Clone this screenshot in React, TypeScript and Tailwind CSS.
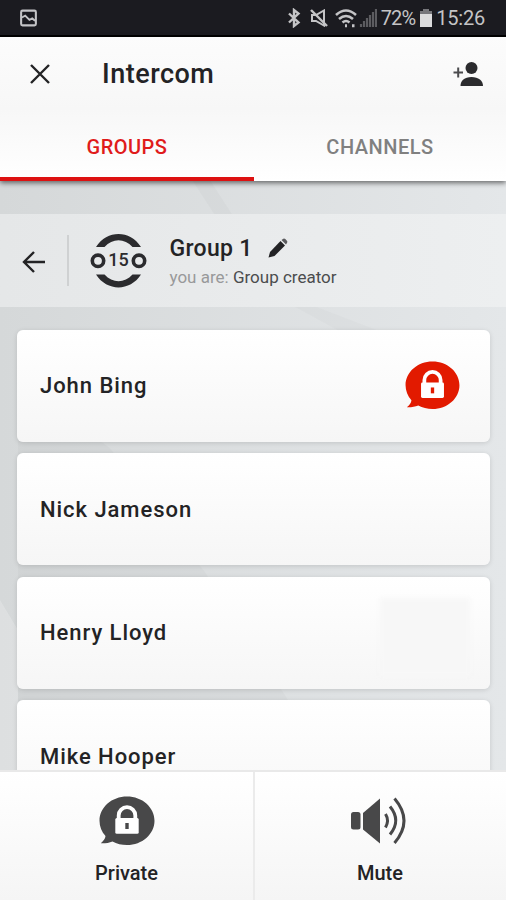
import React, { useState } from 'react';

type Tab = 'groups' | 'channels';

interface Member {
  id: number;
  name: string;
  isPrivate?: boolean;
  isDimmed?: boolean;
}

const members: Member[] = [
  { id: 1, name: 'John Bing', isPrivate: true },
  { id: 2, name: 'Nick Jameson' },
  { id: 3, name: 'Henry Lloyd', isDimmed: true },
  { id: 4, name: 'Mike Hooper' },
];

// Speech bubble with a padlock, the colour comes from the text colour
const PrivateIcon: React.FC<{ className?: string }> = ({ className }) => (
  <svg viewBox="0 0 56 50" className={className}>
    <path
      d="M28 0.5C43.200 .5 55.500 11.300 55.500 24.700S43.200 49 28 49c-5.300 0-10.300-1.300-14.500-3.600C10 46.800 6 47.400 1.800 47.200c2.600-2 4.500-4.600 4.700-7.200C2.700 35.800.5 30.300.5 24.700.5 11.300 12.800.5 28 .5Z"
      fill="currentColor"
    />
    <path d="M19.700 24v-4.500a8.300 8.300 0 0 1 16.600 0V24" fill="none" stroke="#fff" strokeWidth="3.800" />
    <rect x="16.300" y="22" width="23.400" height="15.800" rx="1.500" fill="#fff" />
    <path d="M26.300 27h3.400v6h-3.400z" fill="currentColor" />
  </svg>
);

const MuteIcon = () => (
  <svg viewBox="0 0 56 48" className="mr-0.5 h-12 w-14 text-[#484849]">
    <rect x="0" y="15" width="9.500" height="17.500" rx="2.500" fill="currentColor" />
    <path d="M12 16 29 1.500v45L12 32.500Z" fill="currentColor" />
    <g fill="none" stroke="currentColor" strokeWidth="3">
      <path d="M34.500 17q4 6.500 0 13.500" />
      <path d="M39 9.500q11.500 14 0 28" />
      <path d="M43.500 1.500q19 22.300 0 44.500" />
    </g>
  </svg>
);

const GroupLogo = () => (
  <svg viewBox="0 0 58 56" className="h-14 w-[58px] shrink-0">
    <g fill="#2b2b2e">
      <path d="M6 14C17-3.200 40-3.200 51 14H42.500C34.500 5 22.500 5 14.500 14Z" />
      <path d="M6 41.500C17 58.700 40 58.700 51 41.500H42.500C34.500 50.500 22.500 50.500 14.500 41.500Z" />
    </g>
    <g fill="none" stroke="#2b2b2e" strokeWidth="3.600">
      <circle cx="8" cy="27.800" r="5.700" />
      <circle cx="49" cy="27.800" r="5.700" />
    </g>
    <text x="28.500" y="33.300" textAnchor="middle" fontSize="18" fontWeight="500" fill="#2b2b2e">
      15
    </text>
  </svg>
);

const StatusBar = () => (
  <div className="flex h-[37px] shrink-0 items-center border-b-2 border-black bg-[#1b1b20] pl-5 pr-[21px] text-[#c4c4c6]">
    <svg viewBox="0 0 18 18" className="h-[18px] w-[17px]" fill="none" stroke="currentColor" strokeWidth="2.200">
      <rect x="1.200" y="1.200" width="15.600" height="15.600" rx="1.500" />
      <path d="M2 8.500l3.500-2 4.500 4.500 3-1.500 3 2.500" strokeWidth="2" />
    </svg>
    <div className="ml-auto flex items-center">
      <svg viewBox="0 0 14 20" className="h-5 w-3.5" fill="none" stroke="currentColor" strokeWidth="2.400">
        <path d="M2 5.500 11.500 14.500 7 18V2L11.500 5.500 2 14.500" />
      </svg>
      <svg viewBox="0 0 18 18" className="ml-[9px] h-[18px] w-[18px]" fill="none" stroke="currentColor" strokeWidth="2">
        <path d="M2 6h4l8-4.500v15L6 12H2Z" />
        <path d="M1 1l16 16" strokeWidth="2.400" />
      </svg>
      <svg viewBox="0 0 22 20" className="ml-[7px] h-5 w-[22px]" fill="none" stroke="currentColor" strokeWidth="2.600">
        <path d="M1 7Q11-2 21 7" />
        <path d="M4 11q7-6 14 0" />
        <path d="M7.500 14.500q3.500-3 7 0" />
        <path d="M10 17.800h2M17 17.800h2.500" strokeWidth="3" />
      </svg>
      <svg viewBox="0 0 18 18" className="ml-0.5 h-[18px] w-[18px] text-[#5c5c60]" stroke="currentColor" strokeWidth="2.200">
        <path d="M2 18v-3M5 18v-6M8 18V9M11 18V6M14 18V3M17 18V0" />
      </svg>
      <span className="ml-1 text-[20px] leading-none tracking-[-0.900px]">72%</span>
      <svg viewBox="0 0 12 18" className="ml-[5px] h-[18px] w-3">
        <path d="M3 0h6v2.500h3V18H0V2.500h3Z" fill="#dcdcdd" />
        <path d="M3 0h6v2.500h3V5H0V2.500h3Z" fill="#77777b" />
      </svg>
      <span className="ml-1 text-[20px] leading-none tracking-[-0.200px]">15:26</span>
    </div>
  </div>
);

const App: React.FC = () => {
  const [tab, setTab] = useState<Tab>('groups');

  return (
    <div className="relative isolate flex h-[900px] w-full flex-col overflow-hidden bg-gradient-to-r from-[#d5d8d9] to-[#e4e7e9] font-[Roboto,sans-serif] text-[#232325]">
      {/* Backdrop artwork */}
      <svg viewBox="0 0 506 900" className="absolute inset-0 -z-10 h-full w-full">
        <path d="M192 180h18l22 34h-18Z" fill="#000" opacity="0.02" />
        <path d="M295 307h22l60 23h-40Z" fill="#000" opacity="0.015" />
        <path d="M18 380 110 448 205 572 285 695 330 771H18Z" fill="#000" opacity="0.02" />
        <path d="M0 600 18 630V771H0Z" fill="#fff" opacity="0.2" />
      </svg>

      <StatusBar />

      {/* Header */}
      <header className="relative z-10 shrink-0 bg-gradient-to-b from-[#fcfcfc] via-[#f7f7f7] to-white shadow-[0_2px_5px_rgba(0,0,0,0.55)]">
        <div className="flex h-[74px] items-center pl-[30px] pr-[22px]">
          <button className="flex">
            <svg viewBox="0 0 20 20" className="h-5 w-5" fill="none" stroke="#232325" strokeWidth="2.400">
              <path d="M1 1l18 18M19 1 1 19" />
            </svg>
          </button>
          <h1 className="ml-[52px] text-[27px] font-medium leading-none tracking-[0.500px]">Intercom</h1>
          <button className="ml-auto flex">
            <svg viewBox="0 0 31 26" className="h-[26px] w-[31px]" fill="#2b2b2e">
              <circle cx="18.500" cy="7" r="6" />
              <path d="M7.500 25c0-5.500 4-9 11-9s11.500 3.500 11.500 9Z" />
              <path d="M.5 11.500h9.500M5.200 6.500v10" stroke="#4b4b4e" strokeWidth="2" />
            </svg>
          </button>
        </div>
        <div className="flex h-[70px] text-[20px] font-medium tracking-[0.500px]">
          <button
            onClick={() => setTab('groups')}
            className={`w-[254px] border-b-4 pt-1.5 ${tab === 'groups' ? 'border-[#dd1111] text-[#e01b1b]' : 'border-transparent text-[#808080]'}`}
          >
            GROUPS
          </button>
          <button
            onClick={() => setTab('channels')}
            className={`flex-1 border-b-4 pt-1.5 ${tab === 'channels' ? 'border-[#dd1111] text-[#e01b1b]' : 'border-transparent text-[#808080]'}`}
          >
            CHANNELS
          </button>
        </div>
      </header>

      {/* Current group */}
      <section className="mt-[33px] flex h-[93px] shrink-0 items-center bg-gradient-to-r from-[#e5e7e8] to-[#edeff0] pl-[22px]">
        <button className="flex">
          <svg viewBox="0 0 23 22" className="mt-0.5 h-[22px] w-[23px]" fill="none" stroke="#232325" strokeWidth="2.400">
            <path d="M12 1 2 11l10 10M2 11h21" />
          </svg>
        </button>
        <div className="ml-[22px] mr-[21px] h-[51px] w-0.5 bg-[#cfd1d2]" />
        <GroupLogo />
        <div className="ml-[21.500px] flex flex-col pt-[3px]">
          <div className="flex items-center">
            <h2 className="text-[23px] font-medium leading-7 tracking-[0.300px]">Group 1</h2>
            <svg viewBox="0 0 20 20" className="-mt-0.5 ml-[15px] h-5 w-5" fill="#232325">
              <path d="M.5 19.500 2 14 12.500 3l4.500 4.500L6.500 18Z" />
              <path d="M13.500 2 15.300.8q1-.6 2 .3l1.600 1.600q.9 1 .2 2L18 6.500Z" fill="#5b5b5e" />
            </svg>
          </div>
          <p className="mt-0.5 text-[17px] leading-6 text-[#98999a]">
            you are: <span className="text-[#4b4c4e]">Group creator</span>
          </p>
        </div>
      </section>

      {/* Members */}
      <main className="flex min-h-0 flex-1 flex-col gap-[11.500px] overflow-hidden pl-[17px] pr-4 pt-[22.800px]">
        {members.map((member) => (
          <div
            key={member.id}
            className="flex h-[112px] shrink-0 items-center justify-between rounded-md bg-gradient-to-b from-white to-[#f6f6f6] pl-[23px] pr-[30px] shadow-[0_1px_5px_rgba(0,0,0,0.13)]"
          >
            <span className="text-[22px] font-medium tracking-[0.950px]">{member.name}</span>
            {member.isPrivate && <PrivateIcon className="h-[49px] w-[55px] text-[#e21a00]" />}
            {member.isDimmed && <div className="-mr-2.5 mt-2 h-[78px] w-[90px] bg-[#f7f7f7] blur-[2px]" />}
          </div>
        ))}
      </main>

      {/* Actions */}
      <footer className="z-10 flex h-[130px] shrink-0 border-t-2 border-[#e9e9e9] bg-gradient-to-b from-white to-[#f5f5f5] text-[20px] font-medium">
        <button className="flex w-[255px] flex-col items-center border-r-2 border-[#ebebeb] pt-6">
          <PrivateIcon className="h-[50px] w-14 text-[#484849]" />
          <span className="mt-3 leading-[30px]">Private</span>
        </button>
        <button className="flex flex-1 flex-col items-center pr-px pt-[25px]">
          <MuteIcon />
          <span className="mt-[13px] leading-[30px]">Mute</span>
        </button>
      </footer>
    </div>
  );
};

export default App;
